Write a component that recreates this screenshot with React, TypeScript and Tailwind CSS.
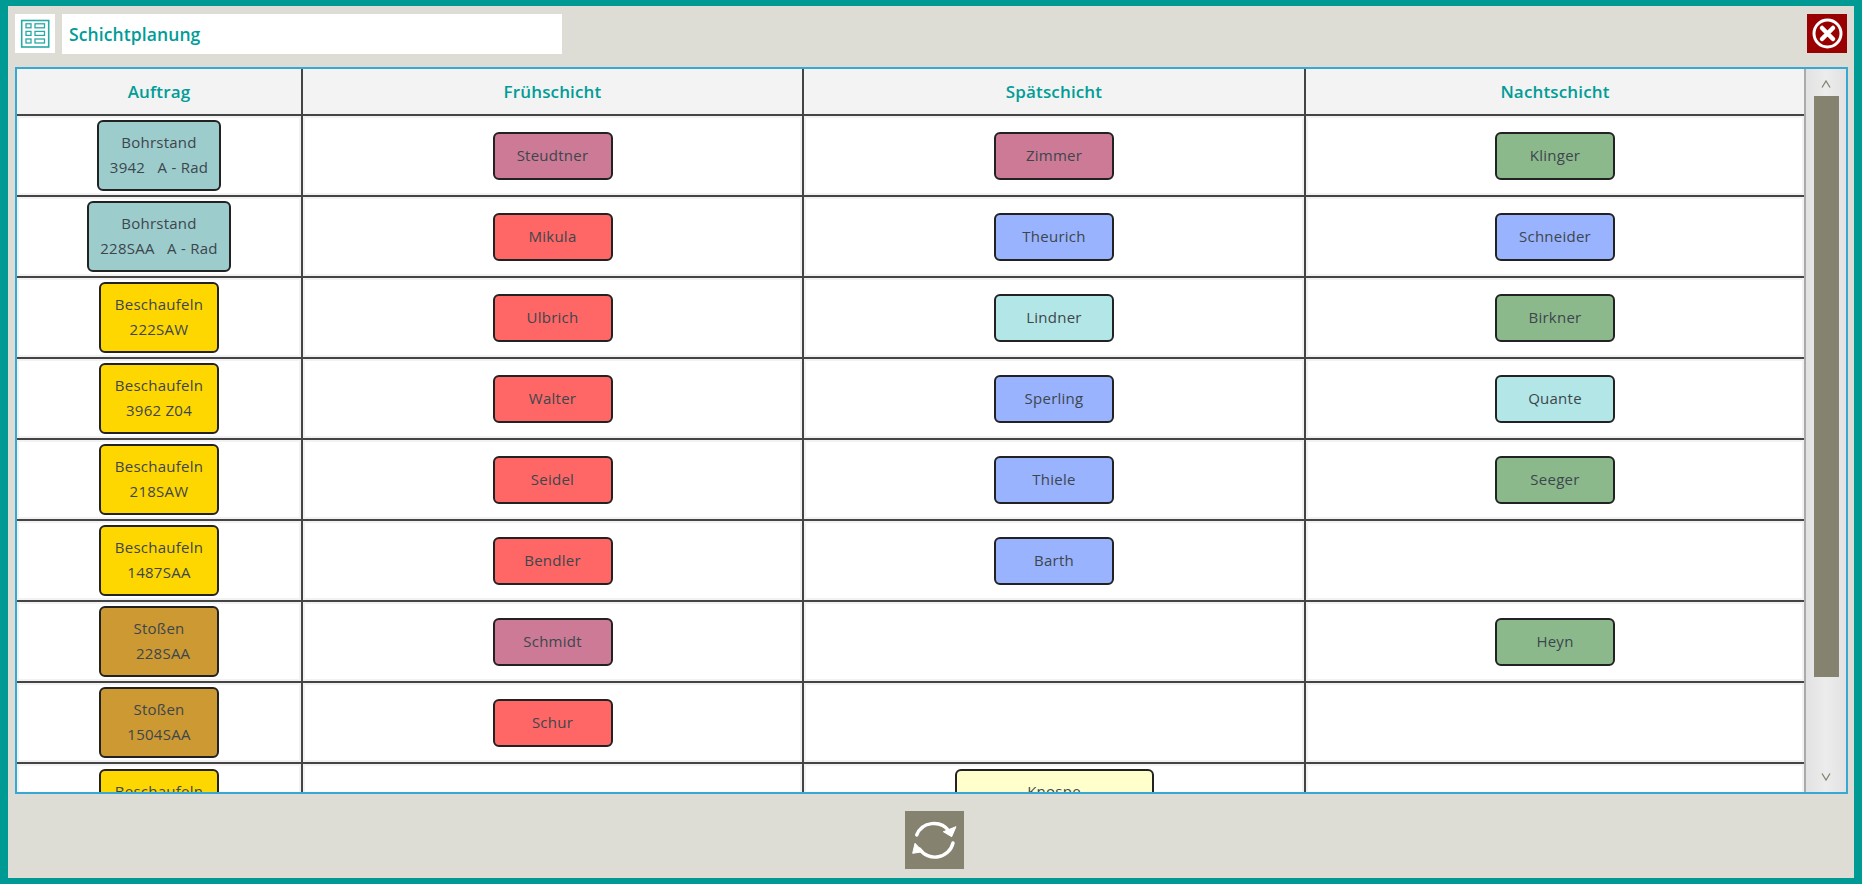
import React from "react";

type C = { t: string; c: string; w?: string } | null;

const CY = "bg-[#9ccccc]";
const GO = "bg-[#ffd700]";
const BR = "bg-[#cc9933]";
const PK = "bg-[#cc7a96]";
const RD = "bg-[#ff6666]";
const BL = "bg-[#99b3ff]";
const LC = "bg-[#b3e6e6]";
const GN = "bg-[#8cb98c]";
const LY = "bg-[#ffffcc]";

const rows: { a: [string, string, string]; f: C; s: C; n: C }[] = [
  { a: ["Bohrstand", "3942   A - Rad", CY], f: { t: "Steudtner", c: PK }, s: { t: "Zimmer", c: PK }, n: { t: "Klinger", c: GN } },
  { a: ["Bohrstand", "228SAA   A - Rad", CY], f: { t: "Mikula", c: RD }, s: { t: "Theurich", c: BL }, n: { t: "Schneider", c: BL } },
  { a: ["Beschaufeln", "222SAW", GO], f: { t: "Ulbrich", c: RD }, s: { t: "Lindner", c: LC }, n: { t: "Birkner", c: GN } },
  { a: ["Beschaufeln", "3962 Z04", GO], f: { t: "Walter", c: RD }, s: { t: "Sperling", c: BL }, n: { t: "Quante", c: LC } },
  { a: ["Beschaufeln", "218SAW", GO], f: { t: "Seidel", c: RD }, s: { t: "Thiele", c: BL }, n: { t: "Seeger", c: GN } },
  { a: ["Beschaufeln", "1487SAA", GO], f: { t: "Bendler", c: RD }, s: { t: "Barth", c: BL }, n: null },
  { a: ["Stoßen", "  228SAA", BR], f: { t: "Schmidt", c: PK }, s: null, n: { t: "Heyn", c: GN } },
  { a: ["Stoßen", "1504SAA", BR], f: { t: "Schur", c: RD }, s: null, n: null },
];

const cols = "grid grid-cols-[286px_501px_502px_1fr]";
const cardText = "text-[15px] tracking-[0.25px] text-[#3c464c]";

function Order({ a }: { a: [string, string, string] }) {
  return (
    <div className={`${a[2]} ${cardText} min-w-[120px] h-[71px] px-[11px] pb-[2px] border-2 border-[#222] rounded-md flex flex-col items-center justify-center leading-[25px] whitespace-pre`}>
      <span>{a[0]}</span>
      <span>{a[1]}</span>
    </div>
  );
}

function Person({ p }: { p: C }) {
  if (!p) return null;
  return (
    <div className={`${p.c} ${cardText} w-[120px] h-[48px] border-2 border-[#222] rounded-md flex items-center justify-center`}>
      {p.t}
    </div>
  );
}

function Cell({ children, last }: { children?: React.ReactNode; last?: boolean }) {
  return (
    <div className={last ? "h-full" : "h-full border-r-2 border-[#444]"}>
      <div className="h-full border-2 border-[#f2f2f2] bg-white flex items-center justify-center">{children}</div>
    </div>
  );
}

function Head({ t, last }: { t: string; last?: boolean }) {
  return (
    <div className={`h-full flex items-center justify-center bg-[#f3f3f3] text-[17px] tracking-[0.15px] font-semibold text-[#009c97] ${last ? "" : "border-r-2 border-[#444]"}`}>
      {t}
    </div>
  );
}

export default function App() {
  return (
    <div
      className="w-[1862px] h-[884px] overflow-hidden flex flex-col bg-[#dddcd5] border-t-[6px] border-l-[8px] border-r-[8px] border-b-[6px] border-[#009a94]"
      style={{ fontFamily: '"Open Sans", "Noto Sans", sans-serif' }}
    >
      <div className="flex items-start justify-between pt-[8px] pl-[7px] pr-[7px] h-[61px] shrink-0">
        <div className="flex gap-[7px]">
          <div className="w-[40px] h-[39px] bg-white">
            <svg width="40" height="39" viewBox="0 0 40 39" fill="none" stroke="#2aa9a4" strokeWidth="1.3">
              <rect x="6.7" y="6.5" width="27" height="26.5" strokeWidth="1.6" />
              <rect x="11" y="9.8" width="5" height="4" />
              <rect x="20" y="9.8" width="9.5" height="4" />
              <rect x="11" y="17.4" width="5" height="4" />
              <rect x="20" y="17.4" width="9.5" height="4" />
              <rect x="11" y="25" width="5" height="4" />
              <rect x="20" y="25" width="9.5" height="4" />
            </svg>
          </div>
          <div className="w-[500px] h-[40px] bg-white flex items-center px-[7px] text-[17.5px] tracking-[0.1px] font-semibold text-[#009c97]">
            Schichtplanung
          </div>
        </div>
        <div className="w-[40px] h-[39px] bg-[#990000]">
          <svg width="40" height="39" viewBox="0 0 40 39" fill="none" stroke="white">
            <circle cx="20.5" cy="19.5" r="13.5" strokeWidth="3" />
            <path d="M15 14 L26 25 M26 14 L15 25" strokeWidth="4.5" strokeLinecap="round" />
          </svg>
        </div>
      </div>

      <div className="ml-[7px] mr-[6px] h-[727px] shrink-0 border-2 border-[#35a8d6] flex overflow-hidden">
        <div className="flex-1 min-w-0 overflow-hidden">
          <div className={`${cols} h-[47px] border-b-2 border-[#444]`}>
            <Head t="Auftrag" />
            <Head t="Frühschicht" />
            <Head t="Spätschicht" />
            <Head t="Nachtschicht" last />
          </div>
          {rows.map((r, i) => (
            <div key={i} className={`${cols} h-[81px] border-b-2 border-[#444]`}>
              <Cell><Order a={r.a} /></Cell>
              <Cell><Person p={r.f} /></Cell>
              <Cell><Person p={r.s} /></Cell>
              <Cell last><Person p={r.n} /></Cell>
            </div>
          ))}
          <div className={`${cols} h-[81px]`}>
            <Cell><Order a={["Beschaufeln", " ", GO]} /></Cell>
            <Cell />
            <Cell>
              <div className={`${LY} ${cardText} w-[199px] h-[71px] pb-[2px] border-2 border-[#222] rounded-md flex flex-col items-center justify-center leading-[25px] whitespace-pre`}>
                <span>Knospe</span>
                <span> </span>
              </div>
            </Cell>
            <Cell last />
          </div>
        </div>

        <div className="w-[42px] shrink-0 border-l-2 border-[#aaaaaa] bg-gradient-to-r from-[#e2e2e2] via-[#ececec] to-[#e2e2e2] flex flex-col items-center">
          <svg className="mt-[11px] mb-[8px] shrink-0" width="10" height="8" viewBox="0 0 10 8" fill="none" stroke="#85826f" strokeWidth="1.3">
            <path d="M1 7.5 L5 1 L9 7.5" />
          </svg>
          <div className="w-[25px] h-[581px] shrink-0 bg-[#85826f]" />
          <svg className="mt-[96px] shrink-0" width="10" height="8" viewBox="0 0 10 8" fill="none" stroke="#85826f" strokeWidth="1.3">
            <path d="M1 0.5 L5 7 L9 0.5" />
          </svg>
        </div>
      </div>

      <div className="flex justify-center pl-[6px] pt-[17px]">
        <div className="w-[59px] h-[58px] bg-[#85826f]">
          <svg width="59" height="58" viewBox="0 0 59 58" fill="none" stroke="white">
            <path d="M11.7 24 A18.5 18 0 0 1 44 20" strokeWidth="3.4" strokeLinecap="round" />
            <path d="M48 32 A18.5 18 0 0 1 14.5 38" strokeWidth="3.4" strokeLinecap="round" />
            <path d="M51 15.7 L46.7 25.7 L38.3 20.7 Z" fill="white" stroke="white" strokeWidth="1" strokeLinejoin="round" />
            <path d="M10 32.3 L7.7 42.3 L18 40.7 Z" fill="white" stroke="white" strokeWidth="1" strokeLinejoin="round" />
          </svg>
        </div>
      </div>
    </div>
  );
}
